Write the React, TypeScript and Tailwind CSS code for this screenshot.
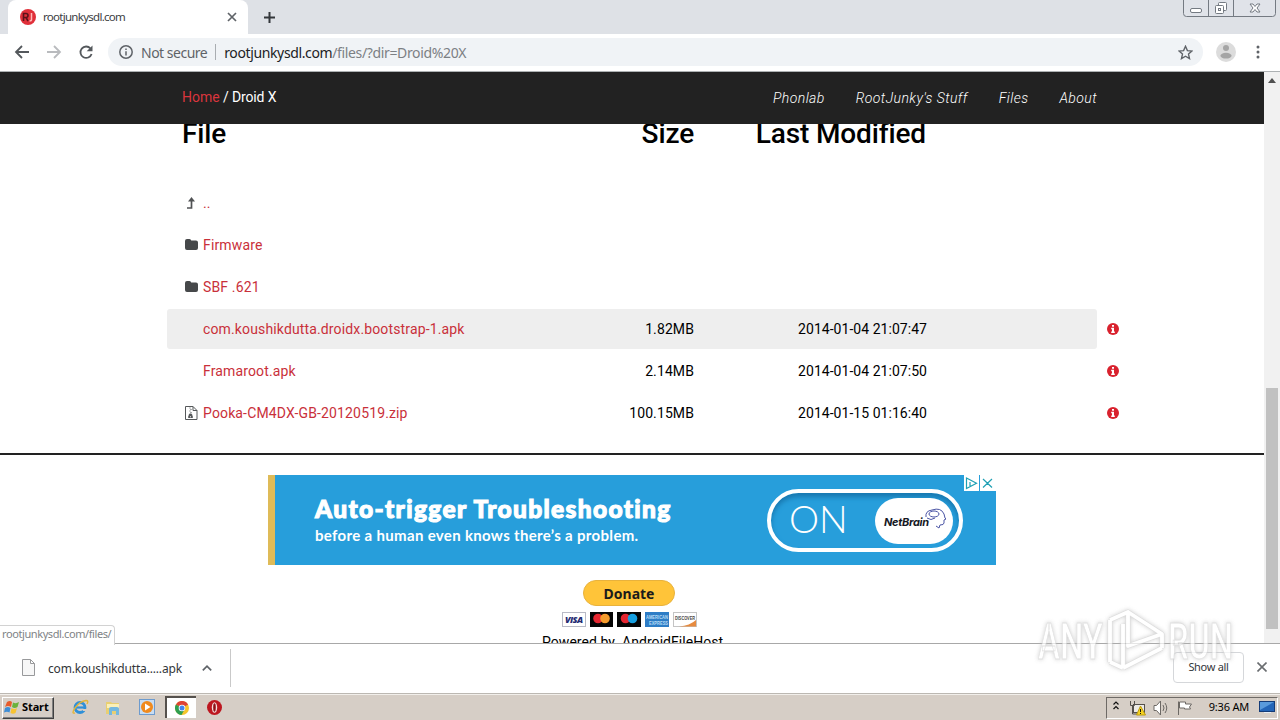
import React from 'react';

interface FileEntry {
  name: string;
  icon: 'up' | 'folder' | 'zip' | 'none';
  size?: string;
  modified?: string;
  active?: boolean;
}

const files: FileEntry[] = [
  { name: '..', icon: 'up' },
  { name: 'Firmware', icon: 'folder' },
  { name: 'SBF .621', icon: 'folder' },
  { name: 'com.koushikdutta.droidx.bootstrap-1.apk', icon: 'none', size: '1.82MB', modified: '2014-01-04 21:07:47', active: true },
  { name: 'Framaroot.apk', icon: 'none', size: '2.14MB', modified: '2014-01-04 21:07:50' },
  { name: 'Pooka-CM4DX-GB-20120519.zip', icon: 'zip', size: '100.15MB', modified: '2014-01-15 01:16:40' },
];

const TabStrip = () => (
  <div className="flex h-[34px] bg-[#dee1e6] pl-2">
    <div className="flex h-full w-[240px] items-center rounded-t-lg bg-white pl-3 pr-[11px]">
      <svg width="16" height="16" viewBox="0 0 16 16">
        <circle cx="8" cy="8" r="8" fill="#e0303a" />
        <path d="M3.500 12V4.500H6q2 0 2 2T6 8.500H4M6 8.500L8 12" stroke="#5b1218" strokeWidth="1.600" fill="none" />
        <path d="M11.500 4v6.500q0 1.500-2 1.500" stroke="#ffb9b9" strokeWidth="1.500" fill="none" />
      </svg>
      <span className="ml-[7px] text-[11.5px] tracking-[-0.72px] text-[#3c4043]">rootjunkysdl.com</span>
      <svg className="ml-auto" width="10" height="10" viewBox="0 0 10 10" stroke="#5f6368" strokeWidth="1.700">
        <path d="M1 1l8 8M9 1L1 9" />
      </svg>
    </div>
    <svg className="ml-[15px] mt-[11px]" width="13" height="13" viewBox="0 0 13 13" stroke="#33373b" strokeWidth="2">
      <path d="M6.500 1v11M1 6.500h11" />
    </svg>
    <svg className="ml-auto mr-[4px]" width="93" height="18" viewBox="0 0 93 18" fill="none" stroke="#747a82">
      <path d="M.5 0v13.500q0 3 3 3h86q3 0 3-3V0M25.500 0v16.500M50.500 0v16.500" fill="#e0e3e9" />
      <rect x="7.500" y="8.500" width="11" height="4" rx="1.500" fill="#fff" />
      <rect x="35.500" y="2.500" width="8" height="8" rx="1" fill="#fff" />
      <rect x="32.500" y="5.500" width="8" height="8" rx="1" fill="#fff" />
      <rect x="35.500" y="8.500" width="2" height="2" />
      <path d="M67 4h3l2 2.500L74 4h3l-3 4 3 4h-3l-2-2.500L70 12h-3l3-4z" fill="#fff" />
    </svg>
  </div>
);

const Toolbar = () => (
  <div className="flex h-[37px] items-center bg-white pb-px pl-[14px]">
    <svg width="80" height="16" viewBox="0 0 80 16" fill="none" strokeWidth="1.800">
      <path d="M15 8H2M8 2L2 8l6 6" stroke="#54585c" />
      <path d="M33 8h13M40 2l6 6-6 6" stroke="#b9bbbe" />
      <path d="M76.500 4.500A5.700 5.700 0 1 0 77.600 10" stroke="#54585c" />
      <path d="M78.500 1.500v5.800h-5.800z" fill="#54585c" />
    </svg>
    <div className="ml-[14px] flex h-[28px] w-[1095px] items-center rounded-full bg-[#f0f3f6] pl-[11px] pr-[10px]">
      <svg width="14" height="14" viewBox="0 0 14 14" fill="none" stroke="#5f6368" strokeWidth="1.500">
        <circle cx="7" cy="7" r="6.200" />
        <path d="M7 6.200v4.300M7 3.400v1.500" />
      </svg>
      <span className="ml-2 text-[14px] tracking-[-0.5px] text-[#5f6368]">Not secure</span>
      <span className="mx-[8px] h-4 w-px bg-[#a9adb1]" />
      <span className="text-[14px] tracking-[-0.37px] text-[#202124]">rootjunkysdl.com</span>
      <span className="text-[14px] tracking-[-0.36px] text-[#7c8084]">/files/?dir=Droid%20X</span>
      <svg className="ml-auto" width="15" height="15" viewBox="0 0 15 15" fill="none" stroke="#5f6368" strokeWidth="1.400">
        <path d="M7.500 1.300l1.900 4.300 4.600.4-3.500 3.100 1 4.500-4-2.400-4 2.400 1-4.500L1 6l4.600-.4z" />
      </svg>
    </div>
    <svg className="ml-[13px]" width="20" height="20" viewBox="0 0 20 20">
      <circle cx="10" cy="10" r="10" fill="#dcdcdc" />
      <circle cx="10" cy="6" r="3" fill="#a5a5a5" />
      <ellipse cx="10" cy="13.700" rx="5.600" ry="2.900" fill="#a5a5a5" />
    </svg>
    <svg className="ml-[20px]" width="4" height="14" viewBox="0 0 4 14" fill="#5f6368">
      <circle cx="2" cy="2" r="1.500" />
      <circle cx="2" cy="7" r="1.500" />
      <circle cx="2" cy="12" r="1.500" />
    </svg>
  </div>
);

const EntryIcon = ({ icon }: { icon: FileEntry['icon'] }) => {
  if (icon === 'folder') {
    return (
      <svg width="13" height="12" viewBox="0 0 13 12" fill="#46484a">
        <path d="M0 2q0-2 2-2h2.500q1.500 0 1.700 1.500H11q2 0 2 2V9q0 2-2 2H2Q0 11 0 9z" />
      </svg>
    );
  }
  if (icon === 'up') {
    return (
      <svg width="13" height="12" viewBox="0 0 13 12">
        <path d="M2 11h4.500V3" fill="none" stroke="#505254" strokeWidth="1.700" />
        <path d="M6.500 0l3.500 4.500H3z" fill="#505254" />
      </svg>
    );
  }
  if (icon === 'zip') {
    return (
      <svg width="13" height="14" viewBox="0 0 13 14" fill="none" stroke="#55585a">
        <path d="M.5.500h7.500l4 4v9H.5zM8 .500v4h4" />
        <path d="M4.500 2h1M5.500 3.500h1M4.500 5h1M5.500 6.500h1" />
        <path d="M4.500 8h2l1 3.500h-4z" fill="#55585a" />
        <path d="M5 10.800h1" stroke="#fff" />
      </svg>
    );
  }
  return null;
};

const FileRow = ({ file }: { file: FileEntry }) => (
  <div className="flex h-[42px] items-center">
    <div className={`flex h-10 w-[930px] items-center rounded-[3px] pl-[18px] text-[14px] ${file.active ? 'bg-[#eeeeee]' : ''}`}>
      <span className="w-[13px]">
        <EntryIcon icon={file.icon} />
      </span>
      <span className="ml-[5px] w-[300px] whitespace-nowrap tracking-[0.14px] text-[#c9303a]">{file.name}</span>
      <span className="w-[191px] text-right tracking-[0.1px]">{file.size}</span>
      <span className="w-[233px] text-right tracking-[0.04px]">{file.modified}</span>
    </div>
    {file.size && (
      <svg className="ml-[10px]" width="12" height="12" viewBox="0 0 12 12">
        <circle cx="6" cy="6" r="6" fill="#d9222e" />
        <path d="M5 2h2v1.700H5zM4.200 4.800H7v3.700h.8V10H4.200V8.500H5V6.200h-.8z" fill="#fff" />
      </svg>
    )}
  </div>
);

const AdBanner = () => (
  <div className="relative mx-auto mt-5 flex h-[90px] w-[728px] border-l-[7px] border-[#dfbb58] bg-[#279edb] text-white">
    <div className="w-[492px] pl-[40px] pt-[18px]">
      <div className="whitespace-nowrap font-[Lato] text-[24.500px] font-black leading-[32px] tracking-[1.35px] [-webkit-text-stroke:1.1px_white]">
        Auto-trigger Troubleshooting
      </div>
      <div className="whitespace-nowrap font-[Lato] text-[15px] font-bold leading-[20px] tracking-[0.33px]">
        before a human even knows there’s a problem.
      </div>
    </div>
    <div className="mt-[14px] flex h-[63px] w-[196px] items-center rounded-full border-4 border-white pl-[18px] shadow-[inset_0_4px_5px_#1878b0]">
      <span className="-mt-[5px] w-[86px] font-[Lato] text-[38px] font-light leading-none">ON</span>
      <div className="flex h-[46px] w-[78px] shrink-0 items-center rounded-full bg-white pl-[9px]">
        <span className="mt-1 font-[Inter] text-[11px] font-bold italic tracking-[-0.3px] text-[#16181f]">NetBrain</span>
        <svg className="-ml-[4px] -mt-1 shrink-0" width="22" height="21" viewBox="0 0 22 21" fill="none" stroke="#4b55a5">
          <path d="M1 9Q0 3 7 2q9-3 12 4l1 4 1 1-2 1v3q0 2-4 2l-1 3-3-2" />
          <ellipse cx="9" cy="6" rx="5" ry="3" />
          <path d="M2 10q4 3 8 0" />
        </svg>
      </div>
    </div>
    <svg className="absolute right-0 top-0" width="32" height="17" viewBox="0 0 32 17" fill="none" stroke="#20a0b4" strokeWidth="1.200">
      <path d="M0 0h15v16H0zM16 0h16v16H16z" fill="#fff" stroke="none" />
      <path d="M2.500 3l10 5.200L2.500 13.500zM6 7v4M19 4l9 8.500M28 4l-9 8.500" />
    </svg>
  </div>
);

const PaymentCards = () => (
  <svg className="ml-[562px] mt-[6px] block" width="136" height="15" viewBox="0 0 136 15">
    <rect x=".5" y=".5" width="23" height="14" fill="#fff" stroke="#b8bac5" />
    <text x="3" y="11" fontFamily="Open Sans, sans-serif" fontSize="9" fontWeight="800" fontStyle="italic" fill="#242b72" textLength="18">VISA</text>
    <rect x="28" width="23" height="15" fill="#050505" />
    <circle cx="36" cy="6.500" r="4.800" fill="#e52630" />
    <circle cx="43" cy="6.500" r="4.800" fill="#f49b2c" />
    <rect x="55" width="24" height="15" fill="#050505" />
    <circle cx="63.500" cy="6.500" r="4.800" fill="#e52630" />
    <circle cx="70.500" cy="6.500" r="4.800" fill="#169fe0" />
    <rect x="83" width="24" height="15" fill="#2e7dc6" />
    <text x="84" y="7" fontFamily="Liberation Sans, sans-serif" fontSize="6" fontWeight="700" fill="#b9dcf5" textLength="22" lengthAdjust="spacingAndGlyphs">AMERICAN</text>
    <text x="87" y="13" fontFamily="Liberation Sans, sans-serif" fontSize="6" fontWeight="700" fill="#b9dcf5" textLength="19" lengthAdjust="spacingAndGlyphs">EXPRESS</text>
    <rect x="111.500" y=".5" width="23" height="14" fill="#fff" stroke="#c4c4c4" />
    <path d="M134 8v6.500h-17q11-1 17-6.500" fill="#e68a3f" />
    <text x="113" y="8" fontFamily="Liberation Sans, sans-serif" fontSize="5.500" fontWeight="700" fill="#444" textLength="20" lengthAdjust="spacingAndGlyphs">DISCOVER</text>
  </svg>
);

const Page = () => (
  <div className="flex h-[572px] border-t border-[#adb1b3] font-[Roboto] text-black">
    <div className="w-[1264px] overflow-hidden">
      <nav className="relative z-10 flex h-[52px] items-center bg-[#222222] pl-[182px] pr-[167px] text-[14px] text-white">
        <span className="-mt-[2px] tracking-[-0.14px]"><span className="tracking-normal text-[#d9353d]">Home</span> / Droid X</span>
        <div className="ml-auto flex gap-[31px] text-[14px] font-light italic tracking-[0.42px]">
          <span>Phonlab</span>
          <span>RootJunky's Stuff</span>
          <span>Files</span>
          <span>About</span>
        </div>
      </nav>
      <div className="-mt-[8px] flex h-[36px] pl-[182px] text-[28px] font-medium leading-[36px] tracking-[-0.14px]">
        <span className="w-[300px]">File</span>
        <span className="w-[212px] text-right">Size</span>
        <span className="w-[232px] text-right">Last Modified</span>
      </div>
      <div className="ml-[167px] mt-[30px]">
        {files.map((file) => (
          <FileRow key={file.name} file={file} />
        ))}
      </div>
      <div className="mt-[19px] h-[2px] bg-[#222222]" />
      <AdBanner />
      <div className="w-[1258px]">
        <div className="mx-auto mt-[15px] flex h-[26px] w-[92px] items-center justify-center rounded-full border border-[#e8b23c] bg-[#ffc439] font-['Noto_Sans'] text-[14px] font-bold text-[#1b1b1b]">
          Donate
        </div>
        <PaymentCards />
      </div>
      <div className="ml-[542px] mt-[5px] whitespace-pre text-[14px] leading-[20px] tracking-[0.05px]">Powered by  AndroidFileHost</div>
    </div>
    <div className="flex w-4 flex-col bg-[#f1f1f1]">
      <svg width="16" height="17" viewBox="0 0 16 17" fill="#505050">
        <path d="M4 11l4-5 4 5z" />
      </svg>
      <div className="mx-[2px] mt-[299px] h-[241px] bg-[#c1c1c1]" />
    </div>
  </div>
);

const DownloadBar = () => (
  <div className="relative flex h-[50px] items-center border-t border-[#a8a8a8] bg-white pl-[22px]">
    <svg className="-mt-[3px]" width="13" height="17" viewBox="0 0 13 17" fill="#f7f7f7" stroke="#98999b">
      <path d="M.5.500h8l4 4v12H.5zM8.500.500v4h4" />
    </svg>
    <span className="ml-[13px] text-[12px] tracking-[-0.17px] text-[#333639]">com.koushikdutta.....apk</span>
    <svg className="-mt-[2px] ml-[20px]" width="10" height="6" viewBox="0 0 10 6" fill="none" stroke="#5f6368" strokeWidth="1.700">
      <path d="M.8 5.300L5 1.200l4.200 4.100" />
    </svg>
    <div className="ml-[18px] mt-[-2px] h-[38px] w-px bg-[#c9c9c9]" />
    <div className="ml-auto mt-[-3px] flex h-[31px] w-[71px] items-center justify-center rounded border border-[#d5d7da] text-[11px] tracking-[-0.3px] text-[#333639]">Show all</div>
    <svg className="ml-[13px] mr-[13px] mt-[-3px]" width="10" height="10" viewBox="0 0 10 10" stroke="#6a6d70" strokeWidth="1.600">
      <path d="M.5.500l9 9M9.500.500l-9 9" />
    </svg>
    <div className="absolute -top-[19px] left-0 flex h-[20px] w-[115px] items-center rounded-tr border-r border-t border-[#d2d2d2] bg-white pb-[2px] pl-[2px] text-[11px] tracking-[-0.41px] text-[#808386]">
      rootjunkysdl.com/files/
    </div>
  </div>
);

const WindowsFlag = () => (
  <svg width="16" height="15" viewBox="0 0 16 15">
    <path d="M3 2q3-2 5 0L7 7Q4 5 1 7z" fill="#e85c2b" />
    <path d="M9 2.500q3 1.500 6-.5l-1.500 5q-3 2-5.500 0z" fill="#6bb23c" />
    <path d="M1 8q3-2 5.500 0L5.500 12.500Q3 11 0 12.500z" fill="#3f8ed6" />
    <path d="M7.500 8q3 2 5.500 0l-1.500 5q-2.500 1.500-5 0z" fill="#f7c331" />
  </svg>
);

const Taskbar = () => (
  <div className="flex h-[27px] items-center border-t border-[#bcb8b2] bg-[#d6cec6] pl-[2px] shadow-[inset_0_1px_0_#f2efeb]">
    <div className="mt-[1px] flex h-[22px] w-[52px] items-center border border-b-[#404040] border-l-white border-r-[#404040] border-t-white pl-px text-[11px] font-bold text-black shadow-[inset_-1px_-1px_0_#808080]">
      <WindowsFlag />
      <span className="ml-[2px] tracking-[-0.1px]">Start</span>
    </div>
    <svg className="ml-[18px]" width="17" height="16" viewBox="0 0 17 16" fill="none">
      <circle cx="8" cy="8.500" r="5" stroke="#2f90d8" strokeWidth="2.800" />
      <path d="M4 8.500h9" stroke="#2f90d8" strokeWidth="2.200" />
      <path d="M11 11h4" stroke="#d6cec6" strokeWidth="2" />
      <path d="M3 14Q-1 15 3 9q5-7 11-7.500 3 0 1 3.500" stroke="#e2b53a" strokeWidth="1.400" />
    </svg>
    <svg className="ml-[17px]" width="15" height="15" viewBox="0 0 15 15">
      <path d="M0 2h5l1 1h7v11H0z" fill="#e8cf72" />
      <path d="M1 4h12v4H1z" fill="#fbf0b7" />
      <path d="M3 15V9q0-2 2-2h6q2 0 2 2v6h-3v-4H6v4z" fill="#74b8df" />
    </svg>
    <svg className="ml-[18px]" width="16" height="16" viewBox="0 0 16 16">
      <rect x=".5" y=".5" width="15" height="15" fill="#c8ddf2" stroke="#6d9bce" />
      <circle cx="8" cy="8" r="6" fill="#f08a1d" />
      <path d="M6 4.500l5.500 3.500L6 11.500z" fill="#fff" />
    </svg>
    <div className="ml-[10px] flex h-[22px] w-[31px] items-center justify-center border-l-2 border-t-2 border-[#55514d] bg-white pb-px">
      <svg width="14" height="14" viewBox="0 0 14 14">
        <circle cx="7" cy="7" r="7" fill="#f5c52c" />
        <path d="M7 7L.9 3.500A7 7 0 0 1 13.100 3.500z" fill="#df4336" />
        <path d="M7 7L.9 3.500A7 7 0 0 0 6.500 14l3-5.500z" fill="#2f9e50" />
        <circle cx="7" cy="7" r="3.300" fill="#fff" />
        <circle cx="7" cy="7" r="2.500" fill="#4585ee" />
      </svg>
    </div>
    <svg className="ml-[11px]" width="15" height="15" viewBox="0 0 15 15">
      <circle cx="7.500" cy="7.500" r="7.500" fill="#bd1720" />
      <ellipse cx="7.500" cy="7.500" rx="2.700" ry="5.200" fill="#f5dede" />
      <ellipse cx="7.500" cy="7.500" rx="1.300" ry="4.200" fill="#8e1017" />
    </svg>
    <div className="ml-auto mr-[2px] mt-[1px] flex h-[22px] w-[172px] items-center border border-b-white border-l-[#6e6a66] border-r-white border-t-[#6e6a66] pl-[6px]">
      <svg className="-mt-1" width="6" height="9" viewBox="0 0 6 9" fill="none" stroke="#111" strokeWidth="1.200">
        <path d="M.5 3.500L3 1l2.500 2.500M.5 8L3 5.500 5.500 8" />
      </svg>
      <svg className="ml-[10px]" width="17" height="16" viewBox="0 0 17 16" fill="none" stroke="#54504c">
        <rect x="4.500" y="4.500" width="11" height="8" fill="#eceae6" />
        <path d="M1.500 1v4.500h4V1M3.500 5.500V14h5" />
        <path d="M11.500 6l5 9h-9z" fill="#f6d21f" stroke="#bb9a10" />
        <path d="M11.500 9v3M11.500 13v1" stroke="#111" />
      </svg>
      <svg className="ml-[7px]" width="16" height="16" viewBox="0 0 16 16" fill="#fff" stroke="#6d6965">
        <path d="M1 5.500h2.500L7.500 1v14l-4-4.500H1z" />
        <path d="M10 5q2 3 0 6M12 3q3.500 5 0 10" fill="none" />
      </svg>
      <svg className="ml-[8px]" width="16" height="16" viewBox="0 0 16 16" fill="#fff" stroke="#6d6965">
        <path d="M1.500 15V1.500M2.500 2h6v2h6l-2 3 1 2h-6V8h-5z" />
      </svg>
      <span className="ml-auto text-[11px] tracking-[-0.2px] text-black">9:36 AM</span>
      <svg className="ml-[10px] mr-[2px]" width="16" height="13" viewBox="0 0 16 13">
        <rect x=".5" y=".5" width="15" height="10" fill="#2466b8" stroke="#143c78" />
        <path d="M1 1h14L1 9z" fill="#5a9bdc" />
        <path d="M5 11.500h7" stroke="#e8eef5" />
      </svg>
    </div>
  </div>
);

const Watermark = () => (
  <svg className="absolute left-[1030px] top-[600px] z-20 opacity-70 drop-shadow-[0_0_2px_#bbbbbb]" width="215" height="80" viewBox="0 0 215 80">
    <g fill="#fff" stroke="#d4d4d4" strokeWidth=".8" fontFamily="Roboto, sans-serif" fontSize="50" fontWeight="500">
      <text x="8" y="59" textLength="65" lengthAdjust="spacingAndGlyphs">ANY</text>
      <text x="138" y="59" textLength="65" lengthAdjust="spacingAndGlyphs">RUN</text>
    </g>
    <g fill="none" strokeLinejoin="round">
      <path d="M80 20v42M93 24v44M93 68l39-20M98 12l34 22v14M80 20L98 12v34l34-12M80 62l13 6" stroke="#cfcfcf" strokeWidth="5" />
      <path d="M80 20v42M93 24v44M93 68l39-20M98 12l34 22v14M80 20L98 12v34l34-12M80 62l13 6" stroke="#fff" strokeWidth="3.800" />
    </g>
  </svg>
);

const App: React.FC = () => {
  return (
    <div className="relative h-[720px] w-[1280px] overflow-hidden bg-white font-['Noto_Sans',sans-serif]">
      <TabStrip />
      <Toolbar />
      <Page />
      <DownloadBar />
      <Taskbar />
      <Watermark />
    </div>
  );
};

export default App;
